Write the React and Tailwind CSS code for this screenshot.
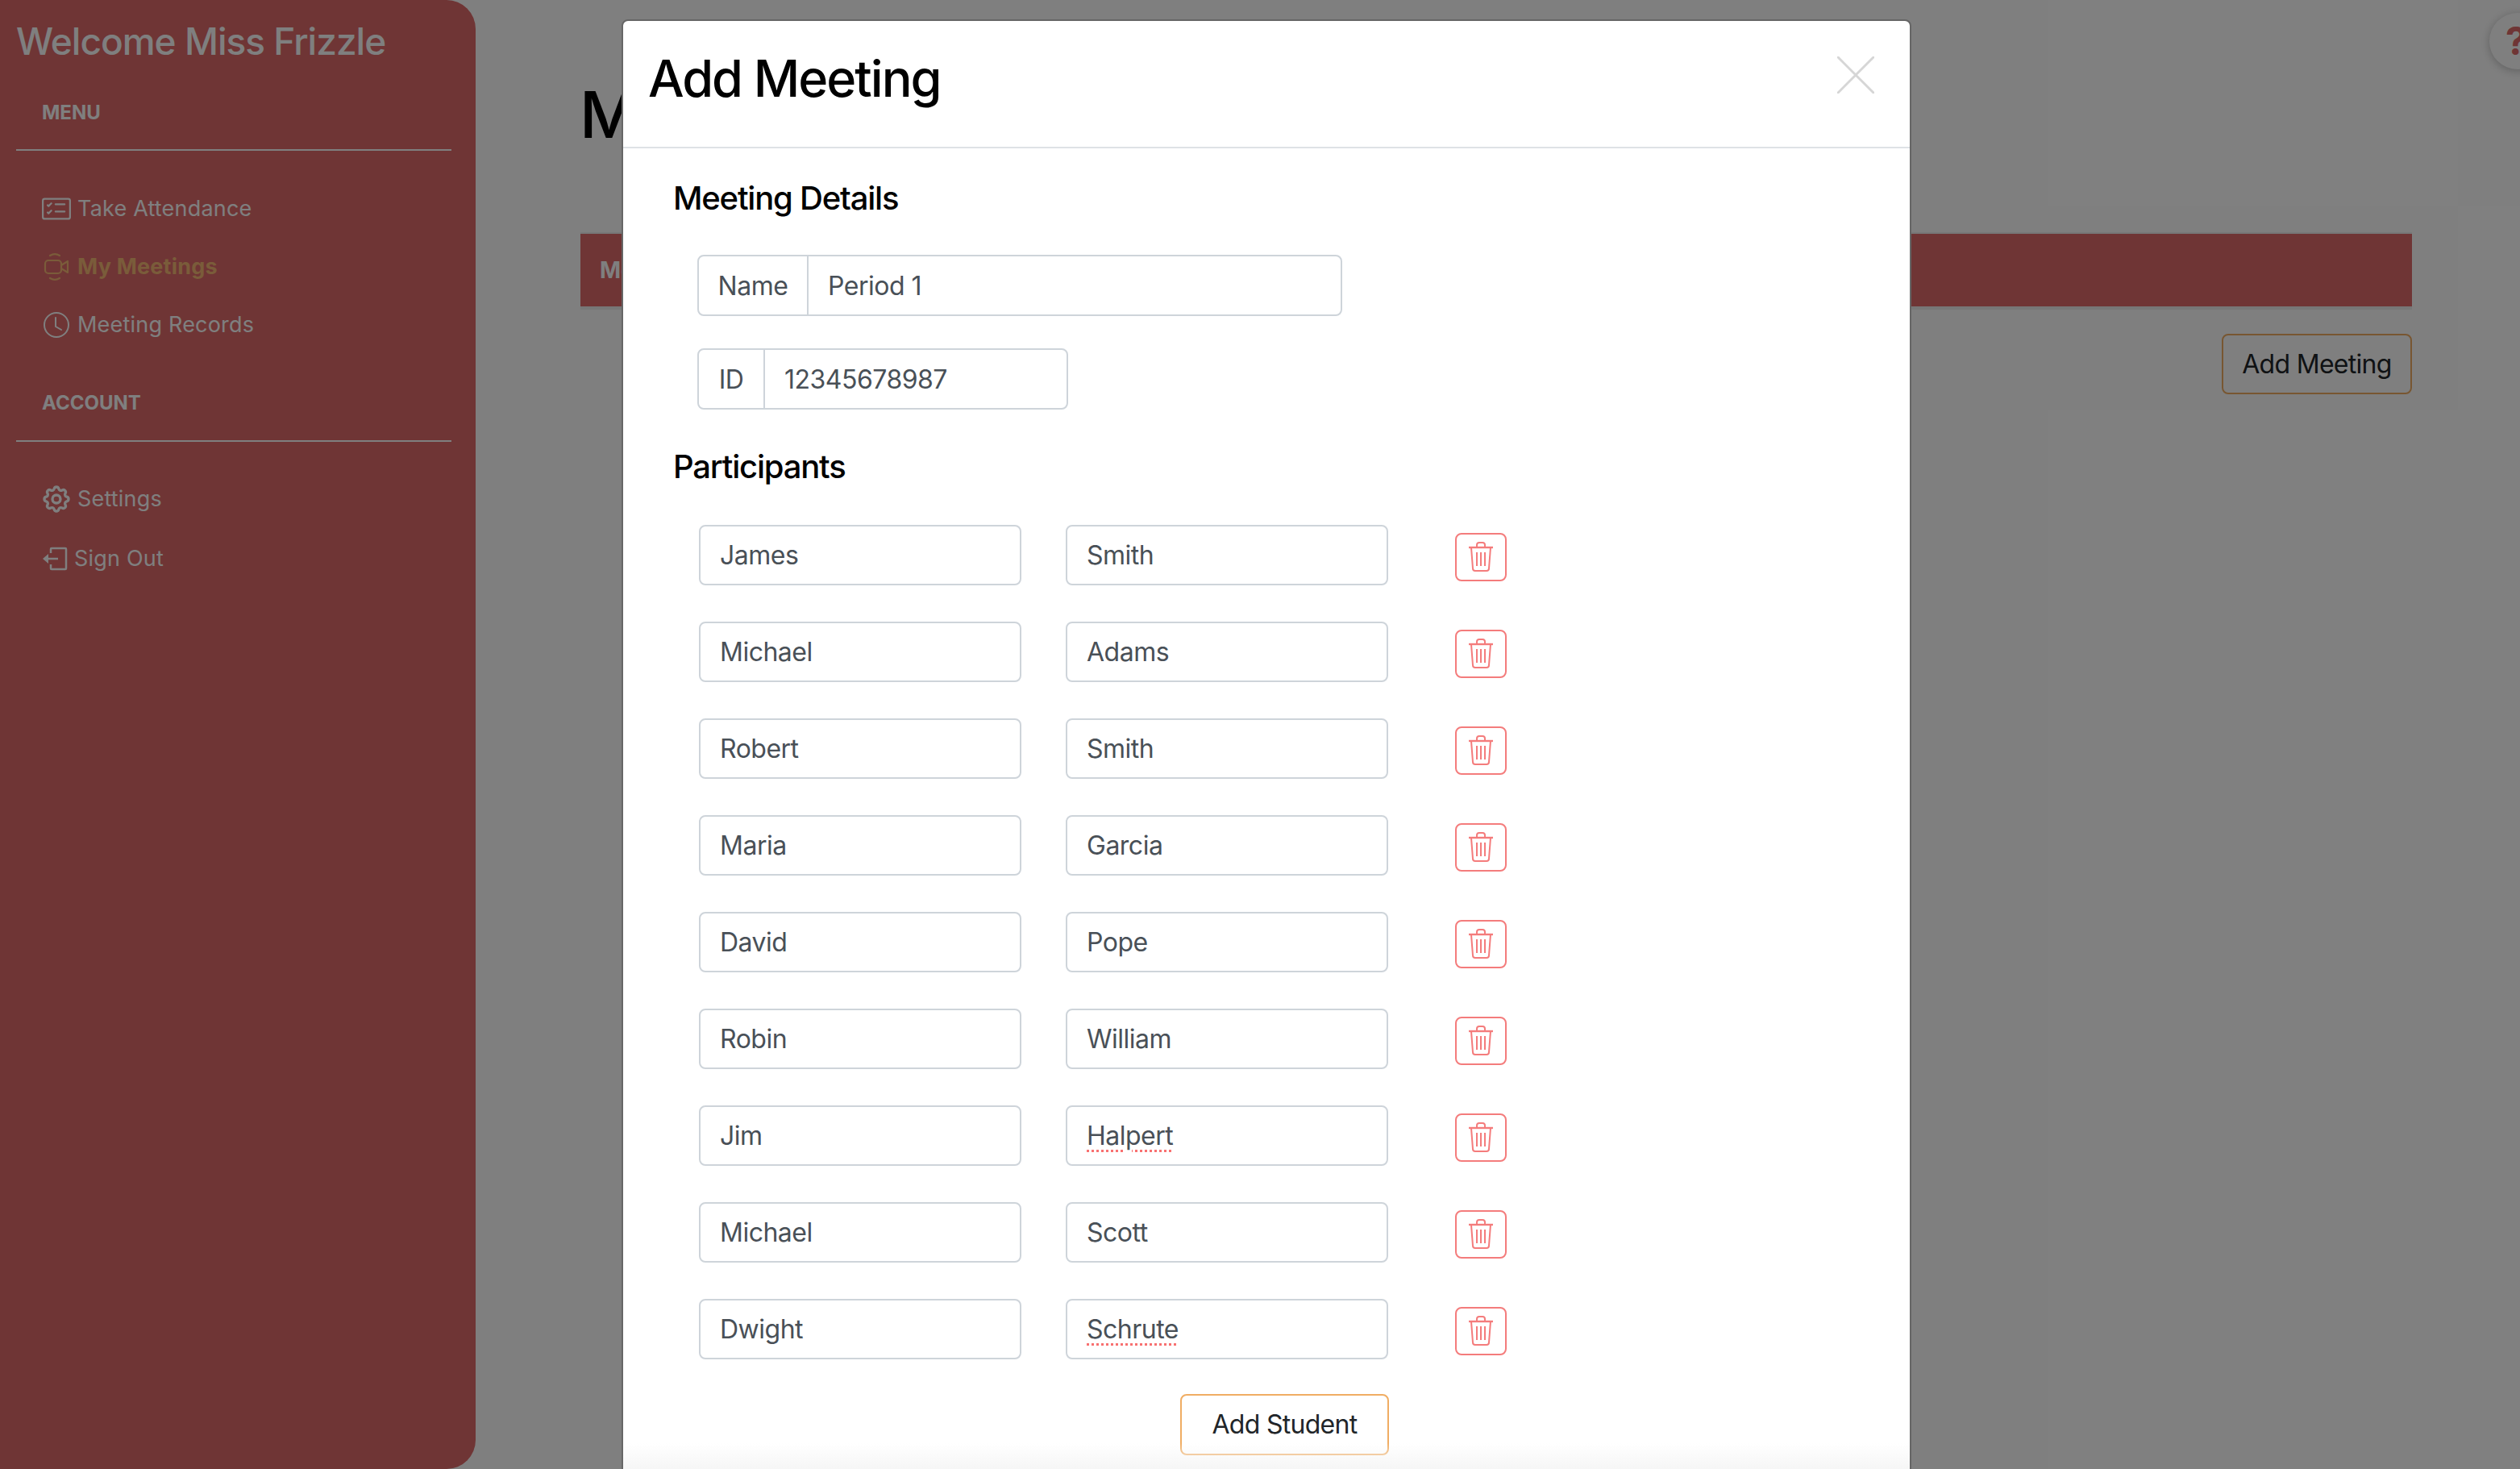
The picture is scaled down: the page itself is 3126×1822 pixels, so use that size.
import { BsCardChecklist, BsClock } from "react-icons/bs";
import { HiOutlineCog } from "react-icons/hi";

const students = [
  ["James", "Smith"],
  ["Michael", "Adams"],
  ["Robert", "Smith"],
  ["Maria", "Garcia"],
  ["David", "Pope"],
  ["Robin", "William"],
  ["Jim", "Halpert", true],
  ["Michael", "Scott"],
  ["Dwight", "Schrute", true],
];

function VideoIcon() {
  return (
    <svg width="32" height="36" viewBox="0 0 32 36" fill="none" stroke="currentColor" strokeWidth="2.200">
      <rect x="2" y="10" width="20" height="16" rx="4" />
      <path d="M22 16l8-5v14l-8-5" strokeLinejoin="round" />
      <path d="M8 4c4-2.500 8-2.500 12 0M8 32c4 2.500 8 2.500 12 0" strokeLinecap="round" />
    </svg>
  );
}

function SignOutIcon() {
  return (
    <svg width="32" height="30" viewBox="0 0 32 30" fill="none" stroke="currentColor" strokeWidth="2.500">
      <path d="M11 8V3a1 1 0 0 1 1-1h17a1 1 0 0 1 1 1v24a1 1 0 0 1-1 1H12a1 1 0 0 1-1-1v-5" />
      <path d="M20 15H6" />
      <path d="M8 9v12L1 15z" fill="currentColor" stroke="none" />
    </svg>
  );
}

function TrashIcon() {
  return (
    <svg width="32" height="38" viewBox="0 0 32 38" fill="none" stroke="#f47c7c" strokeWidth="2">
      <path d="M1 7h30" strokeWidth="2.400" />
      <path d="M11 7V4a3 3 0 0 1 3-3h4a3 3 0 0 1 3 3v3" />
      <path d="M4 7l2 26a3 3 0 0 0 3 3h14a3 3 0 0 0 3-3l2-26" />
      <path d="M11 13v17M16 13v17M21 13v17" />
    </svg>
  );
}

function SideLink({ icon, label, active, className }) {
  return (
    <div className={`flex h-[36px] items-center ${active ? "font-bold text-[#f4b874]" : "text-white"} ${className || ""}`}>
      {icon}
      <span className="text-[27px] tracking-[0.2px]">{label}</span>
    </div>
  );
}

function InputGroup({ label, value, width, labelWidth }) {
  return (
    <div className={`flex h-[76px] items-center rounded-lg border-2 border-[#ced4da] pt-[2px] text-[32px] tracking-[-0.5px] text-[#495057] ${width}`}>
      <div className={`-mt-[2px] flex h-[72px] shrink-0 items-center justify-center border-r-2 border-[#ced4da] pt-[2px] ${labelWidth}`}>{label}</div>
      <div className="pl-6">{value}</div>
    </div>
  );
}

function NameField({ value, misspelled }) {
  return (
    <div className="flex h-[75px] w-[400px] items-center rounded-lg border-2 border-[#ced4da] pl-6 text-[32px] tracking-[-0.5px] text-[#495057]">
      <span className={misspelled ? "underline decoration-[#f87171] decoration-dotted decoration-[3px] underline-offset-[6px]" : ""}>{value}</span>
    </div>
  );
}

export default function App() {
  return (
    <div className="relative h-[1822px] w-[3126px] overflow-hidden bg-white font-['Inter',sans-serif]">
      <div className="flex h-full">
        <aside className="h-full w-[590px] shrink-0 rounded-tr-[36px] rounded-br-[36px] bg-[#de6a6a] pl-5 pr-[30px] text-white">
          <h2 className="flex h-[102px] items-center text-[46px] font-medium tracking-[-1px]">Welcome Miss Frizzle</h2>
          <div className="flex h-[85px] items-center border-b-2 border-white pb-[8px] pl-[32px] text-[24px] font-bold">MENU</div>
          <div className="flex flex-col gap-[36px] pl-[32px] pt-[54px]">
            <SideLink icon={<BsCardChecklist className="mr-[8px] h-[36px] w-[36px]" />} label="Take Attendance" />
            <SideLink active icon={<span className="mr-[8px] flex w-[36px] justify-center"><VideoIcon /></span>} label="My Meetings" />
            <SideLink icon={<span className="mr-[8px] flex w-[36px] justify-center"><BsClock className="h-[32px] w-[32px]" /></span>} label="Meeting Records" />
          </div>
          <div className="mt-[40px] flex h-[87px] items-center border-b-2 border-white pb-[8px] pl-[32px] text-[24px] font-bold">ACCOUNT</div>
          <div className="flex flex-col pl-[32px] pt-[53px]">
            <SideLink icon={<span className="mr-[8px] flex w-[36px] justify-center"><HiOutlineCog className="h-[40px] w-[40px] shrink-0" /></span>} label="Settings" />
            <SideLink className="mt-[38px]" icon={<span className="mr-[8px] flex w-[32px] justify-center"><SignOutIcon /></span>} label="Sign Out" />
          </div>
        </aside>

        <main className="flex-1 pl-[130px] pr-[134px]">
          <h1 className="-ml-[1px] flex h-[288px] items-start pt-[102px] text-[80px] font-medium leading-none text-black">My Meetings</h1>
          <div className="flex h-[96px] items-center border-t-2 border-b-4 border-[#eeeeee] bg-[#de6a6a] pl-[24px] text-[28px] font-bold text-white">Meetings</div>
          <div className="mt-[30px] flex justify-end">
            <button className="flex h-[75px] w-[236px] items-center justify-center rounded-lg border-2 border-[#f0ad63] text-[32px] tracking-[-0.7px] text-[#212529]">Add Meeting</button>
          </div>
        </main>
      </div>

      {/* help button sits in the corner, cut off by the window */}
      <div className="absolute left-[3088px] top-[16px] flex h-[70px] w-[70px] items-center rounded-full bg-white pl-[20px] text-[48px] font-bold text-[#de6a6a] shadow-[0_2px_12px_rgba(0,0,0,0.25)]">?</div>

      <div className="absolute inset-0 bg-black/50" />

      <div className="absolute left-[771px] top-[24px] h-[1830px] w-[1600px] rounded-lg border-2 border-[#666666] bg-white">
        <div className="flex h-[158px] items-start justify-between border-b-2 border-[#dee2e6] pl-[31px] pr-[44px]">
          <h3 className="pt-[40px] text-[63px] font-medium leading-none tracking-[-2px] text-black">Add Meeting</h3>
          <svg className="mt-[44px]" width="46" height="46" viewBox="0 0 46 46" stroke="#d6d6d6" strokeWidth="3">
            <path d="M0 0l46 46M46 0L0 46" />
          </svg>
        </div>
        <div className="pl-[62px]">
          <h4 className="pt-[38px] text-[40px] font-medium leading-[48px] tracking-[-1.2px] text-black">Meeting Details</h4>
          <div className="flex flex-col gap-[40px] pl-[30px] pt-[46px]">
            <InputGroup label="Name" value="Period 1" width="w-[800px]" labelWidth="w-[136px]" />
            <InputGroup label="ID" value="12345678987" width="w-[460px]" labelWidth="w-[82px]" />
          </div>
          <h4 className="pt-[47px] text-[40px] font-medium leading-[48px] tracking-[-1.2px] text-black">Participants</h4>
          <div className="flex flex-col gap-[45px] pl-[32px] pt-[48px]">
            {students.map(([first, last, misspelled], i) => (
              <div key={i} className="flex items-start">
                <NameField value={first} />
                <div className="ml-[55px]">
                  <NameField value={last} misspelled={misspelled} />
                </div>
                <button className="ml-[83px] mt-[10px] flex h-[60px] w-[64px] items-center justify-center rounded-lg border-2 border-[#f47c7c]">
                  <TrashIcon />
                </button>
              </div>
            ))}
          </div>
          <div className="flex pl-[629px] pt-[43px]">
            <button className="flex h-[76px] w-[259px] items-center justify-center rounded-lg border-2 border-[#f0ad63] text-[32px] tracking-[-0.7px] text-[#212529]">Add Student</button>
          </div>
        </div>
      </div>

      <div className="absolute bottom-0 left-[773px] h-[32px] w-[1596px] bg-gradient-to-b from-white/0 to-[#f6f6f6]" />
    </div>
  );
}
